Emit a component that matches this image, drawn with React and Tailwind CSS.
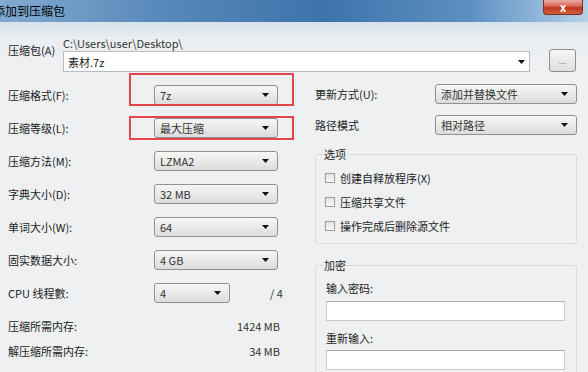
import React from 'react';

const font = { fontFamily: '"Noto Sans CJK SC", "Noto Sans", sans-serif' };

const Arrow = () => (
  <svg width="7" height="4" viewBox="0 0 7 4" className="shrink-0">
    <path d="M0 0 L7 0 L3.5 4 Z" fill="#111" />
  </svg>
);

// 下拉框 (Win7 风格)
const Select = ({ value, width = 'w-[124px]' }) => (
  <div className={`${width} h-[20px] flex items-center justify-between pl-[5px] pr-[8px] border border-[#8f9092] rounded-[3px] bg-linear-to-b from-[#f7f7f7] to-[#dcdcdc] text-[#333]`}>
    <span className="leading-[14px]">{value}</span>
    <Arrow />
  </div>
);

const LeftRow = ({ label, children, box }) => (
  <div className="relative h-[33px] flex items-center">
    <div className="w-[146px] leading-[14px]">{label}</div>
    {children}
    {box}
  </div>
);

const Check = ({ label }) => (
  <div className="h-[24px] flex items-center pl-[9px]">
    <div className="w-[10px] h-[10px] border border-[#9a9a9a] bg-linear-to-b from-[#e4e4e4] to-[#f8f8f8]" />
    <span className="ml-[5px] leading-[14px]">{label}</span>
  </div>
);

export default function App() {
  return (
    <div className="w-[588px] h-[372px] overflow-hidden bg-[#eef0f2] text-[11px] text-[#222]" style={font}>
      {/* 标题栏 */}
      <div className="h-[22px] flex justify-between bg-[linear-gradient(90deg,#80aad1_0%,#5586b8_30%,#3c74aa_55%,#5d90c2_80%,#b5d1e8_100%)]">
        <div className="-ml-[7px] leading-[22px] text-[12px] text-black">添加到压缩包</div>
        <div className="mr-[5px] w-[40px] h-[15px] flex items-center justify-center rounded-b-[4px] border border-t-0 border-[#7a2b22] bg-[linear-gradient(180deg,#eab0a3_0%,#d66250_45%,#bb3520_55%,#d2603f_100%)] text-white font-bold text-[11px] leading-none">
          x
        </div>
      </div>

      <div className="bg-[linear-gradient(180deg,#d6e2ed_0px,#eaeef2_16px,#eef0f2_40px)]">
        {/* 压缩包 */}
        <div className="flex pt-[14px] pl-[8px]">
          <div className="w-[55px] pt-[7px] leading-[14px]">压缩包(A)</div>
          <div className="w-[467px] flex flex-col">
            <div className="leading-[14px] text-[#333]">C:\Users\user\Desktop\</div>
            <div className="mt-[1px] h-[21px] flex items-center justify-between pl-[4px] pr-[4px] bg-white border border-[#b3bcc5]">
              <span className="leading-[14px]">素材.7z</span>
              <Arrow />
            </div>
          </div>
          <div className="ml-[19px] mt-[13px] w-[27px] h-[23px] flex items-center justify-center border border-[#8d8f91] rounded-[3px] bg-linear-to-b from-[#f6f6f6] to-[#dfdfdf] text-[#888] text-[9px] leading-none">
            ...
          </div>
        </div>

        <div className="flex">
          {/* 左列 */}
          <div className="w-[287px] ml-[8px] pt-[6px]">
            <LeftRow
              label="压缩格式(F):"
              box={<div className="absolute left-[121px] top-[-5px] w-[165px] h-[33px] border-2 border-[#e2464c]" />}
            >
              <Select value="7z" />
            </LeftRow>
            <LeftRow
              label="压缩等级(L):"
              box={<div className="absolute left-[121px] top-[5px] w-[165px] h-[24px] border-2 border-[#e2464c]" />}
            >
              <Select value="最大压缩" />
            </LeftRow>
            <LeftRow label="压缩方法(M):">
              <Select value="LZMA2" />
            </LeftRow>
            <LeftRow label="字典大小(D):">
              <Select value="32 MB" />
            </LeftRow>
            <LeftRow label="单词大小(W):">
              <Select value="64" />
            </LeftRow>
            <LeftRow label="固实数据大小:">
              <Select value="4 GB" />
            </LeftRow>
            <LeftRow label="CPU 线程數:">
              <Select value="4" width="w-[76px]" />
              <span className="ml-[40px] leading-[14px] text-[#333]">/ 4</span>
            </LeftRow>
            <div className="h-[33px] flex items-center w-[272px] justify-between">
              <span className="leading-[14px]">压缩所需内存:</span>
              <span className="leading-[14px] text-[#333]">1424 MB</span>
            </div>
            <div className="h-[18px] flex items-center w-[272px] justify-between">
              <span className="leading-[14px]">解压缩所需内存:</span>
              <span className="leading-[14px] text-[#333]">34 MB</span>
            </div>
          </div>

          {/* 右列 */}
          <div className="ml-[20px] w-[262px] pt-[6px]">
            <div className="h-[31px] flex items-center justify-between">
              <span className="leading-[14px]">更新方式(U):</span>
              <Select value="添加并替换文件" width="w-[142px]" />
            </div>
            <div className="h-[31px] flex items-center justify-between">
              <span className="leading-[14px]">路径模式</span>
              <Select value="相对路径" width="w-[142px]" />
            </div>

            {/* 选项 */}
            <div className="mt-[14px] h-[90px] border border-[#d5dce3] rounded-[3px]">
              <div className="-mt-[8px] ml-[7px] px-[1px] w-fit bg-[#eef0f2] leading-[14px]">选项</div>
              <div className="mt-[5px]">
                <Check label="创建自释放程序(X)" />
                <Check label="压缩共享文件" />
                <Check label="操作完成后删除源文件" />
              </div>
            </div>

            {/* 加密 */}
            <div className="mt-[21px] h-[140px] border border-[#d5dce3] rounded-[3px] pl-[10px]">
              <div className="-mt-[8px] -ml-[3px] px-[1px] w-fit bg-[#eef0f2] leading-[14px]">加密</div>
              <div className="mt-[9px] leading-[14px]">输入密码:</div>
              <div className="mt-[6px] w-[239px] h-[20px] bg-white border border-[#c5ccd3] border-t-[#a9b0b8]" />
              <div className="mt-[10px] leading-[14px]">重新输入:</div>
              <div className="mt-[5px] w-[239px] h-[20px] bg-white border border-[#c5ccd3] border-t-[#a9b0b8]" />
            </div>
          </div>
        </div>
      </div>
    </div>
  );
}
